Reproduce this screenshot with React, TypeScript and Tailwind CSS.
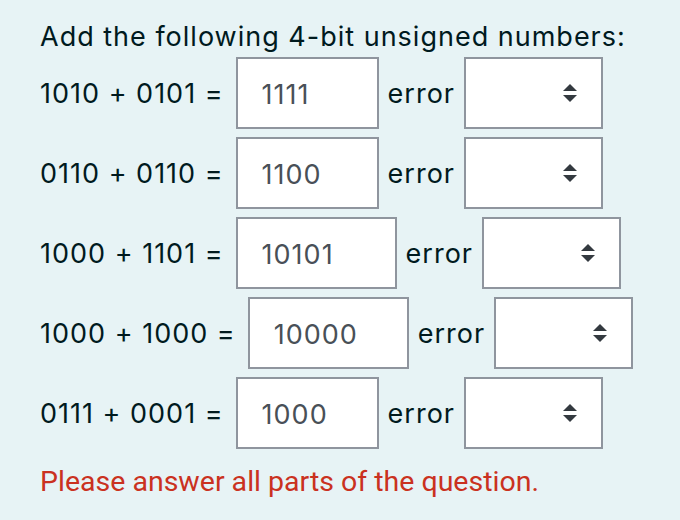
import { useState } from 'react';

type Part = {
    left: string;
    right: string;
    answer: string;
    width: string;
};

const parts: Part[] = [
    { left: '1010', right: '0101', answer: '1111', width: 'w-[143px]' },
    { left: '0110', right: '0110', answer: '1100', width: 'w-[143px]' },
    { left: '1000', right: '1101', answer: '10101', width: 'w-[161px]' },
    { left: '1000', right: '1000', answer: '10000', width: 'w-[161px]' },
    { left: '0111', right: '0001', answer: '1000', width: 'w-[143px]' },
];

function SelectArrows() {
    return (
        <svg width="16" height="18" viewBox="0 0 16 18" className="text-[#343a40]">
            <path d="M8 0 L15 7 L1 7 Z" fill="currentColor" />
            <path d="M8 18 L15 11 L1 11 Z" fill="currentColor" />
        </svg>
    );
}

function Row({ part }: { part: Part }) {
    const [value, setValue] = useState(part.answer);

    return (
        <div className="flex items-center h-[72px]">
            <span className="mr-[12px] pt-[2px]">
                {part.left} + {part.right} =
            </span>
            <input
                value={value}
                onChange={(e) => setValue(e.target.value)}
                className={`${part.width} h-[72px] border-2 border-[#8f959e] bg-white pl-[24px] pt-[2px] text-[#495057] tracking-[1px] outline-none`}
            />
            <span className="ml-[9px] mr-[9px] pt-[2px]">error</span>
            <div className="w-[139px] h-[72px] border-2 border-[#8f959e] bg-white flex items-center justify-end pr-[23px]">
                <SelectArrows />
            </div>
        </div>
    );
}

export default function App() {
    return (
        <div
            className="w-[680px] h-[520px] bg-[#e7f3f5] text-[#001a1e] text-[27px] tracking-[1px] pl-[40px] pt-[17px]"
            style={{ fontFamily: 'Inter, "Noto Sans", sans-serif' }}
        >
            <p className="leading-[40px]">Add the following 4-bit unsigned numbers:</p>
            <div className="flex flex-col gap-[8px]">
                {parts.map((p, i) => (
                    <Row key={i} part={p} />
                ))}
            </div>
            <p
                className="text-[#ca3120] text-[28.5px] tracking-normal mt-[13px] leading-[40px]"
                style={{ fontFamily: 'Roboto, "Liberation Sans", sans-serif' }}
            >
                Please answer all parts of the question.
            </p>
        </div>
    );
}
